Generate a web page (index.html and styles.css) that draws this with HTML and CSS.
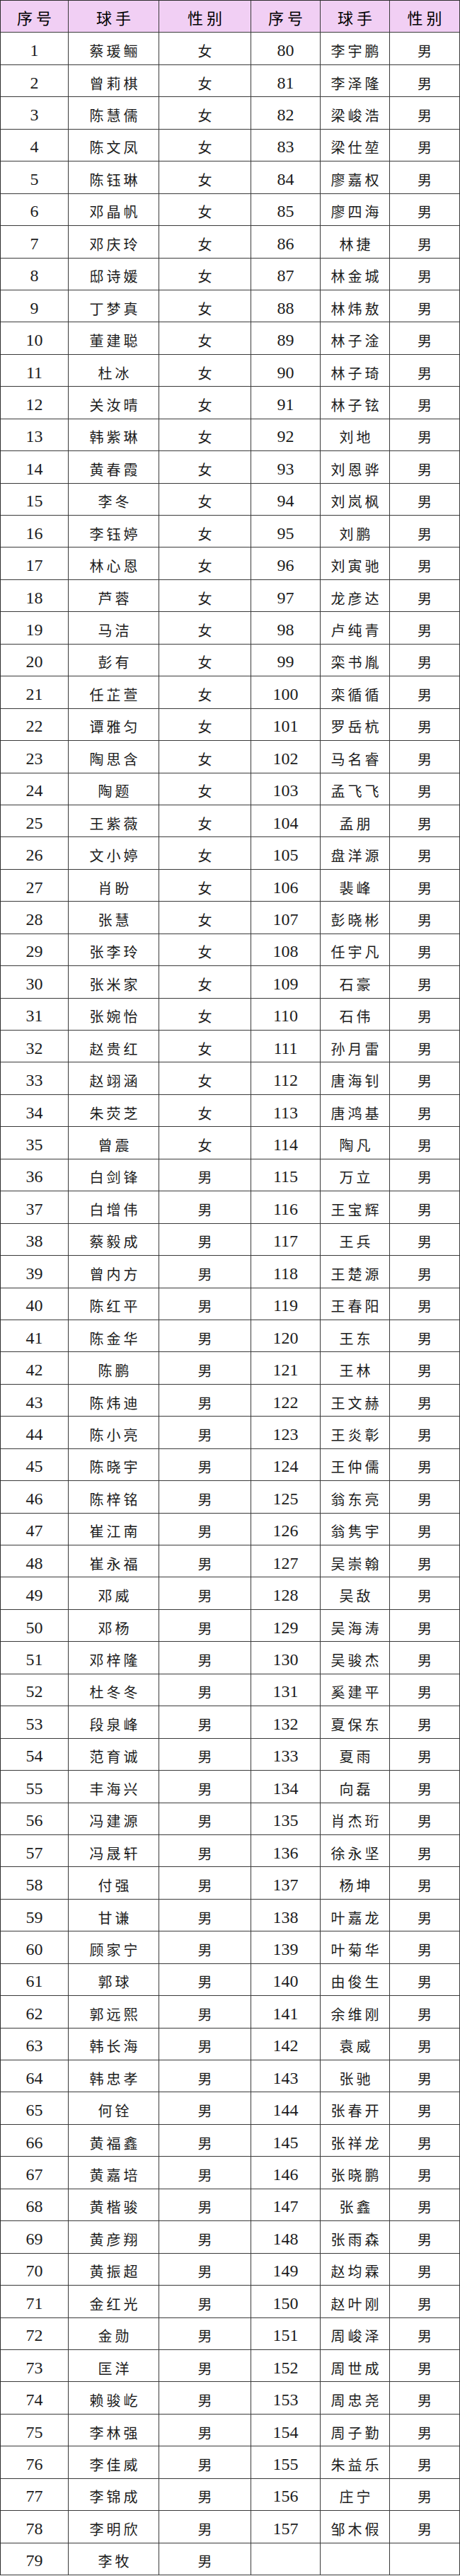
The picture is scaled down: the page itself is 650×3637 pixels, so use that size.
FILE: index.html
```html
<!DOCTYPE html>
<html lang="zh-CN">
<head>
<meta charset="utf-8">
<title>球手名单</title>
<link rel="stylesheet" href="styles.css">
</head>
<body>
<div class="sheet">
<div class="cell zh head">序号</div><div class="cell zh head">球手</div><div class="cell zh head">性别</div><div class="cell zh head">序号</div><div class="cell zh head">球手</div><div class="cell zh head">性别</div>
<div class="cell num">1</div><div class="cell zh">蔡瑗鲡</div><div class="cell zh">女</div><div class="cell num">80</div><div class="cell zh">李宇鹏</div><div class="cell zh">男</div>
<div class="cell num">2</div><div class="cell zh">曾莉棋</div><div class="cell zh">女</div><div class="cell num">81</div><div class="cell zh">李泽隆</div><div class="cell zh">男</div>
<div class="cell num">3</div><div class="cell zh">陈慧儒</div><div class="cell zh">女</div><div class="cell num">82</div><div class="cell zh">梁峻浩</div><div class="cell zh">男</div>
<div class="cell num">4</div><div class="cell zh">陈文凤</div><div class="cell zh">女</div><div class="cell num">83</div><div class="cell zh">梁仕堃</div><div class="cell zh">男</div>
<div class="cell num">5</div><div class="cell zh">陈钰琳</div><div class="cell zh">女</div><div class="cell num">84</div><div class="cell zh">廖嘉权</div><div class="cell zh">男</div>
<div class="cell num">6</div><div class="cell zh">邓晶帆</div><div class="cell zh">女</div><div class="cell num">85</div><div class="cell zh">廖四海</div><div class="cell zh">男</div>
<div class="cell num">7</div><div class="cell zh">邓庆玲</div><div class="cell zh">女</div><div class="cell num">86</div><div class="cell zh">林捷</div><div class="cell zh">男</div>
<div class="cell num">8</div><div class="cell zh">邸诗媛</div><div class="cell zh">女</div><div class="cell num">87</div><div class="cell zh">林金城</div><div class="cell zh">男</div>
<div class="cell num">9</div><div class="cell zh">丁梦真</div><div class="cell zh">女</div><div class="cell num">88</div><div class="cell zh">林炜敖</div><div class="cell zh">男</div>
<div class="cell num">10</div><div class="cell zh">董建聪</div><div class="cell zh">女</div><div class="cell num">89</div><div class="cell zh">林子淦</div><div class="cell zh">男</div>
<div class="cell num">11</div><div class="cell zh">杜冰</div><div class="cell zh">女</div><div class="cell num">90</div><div class="cell zh">林子琦</div><div class="cell zh">男</div>
<div class="cell num">12</div><div class="cell zh">关汝晴</div><div class="cell zh">女</div><div class="cell num">91</div><div class="cell zh">林子铉</div><div class="cell zh">男</div>
<div class="cell num">13</div><div class="cell zh">韩紫琳</div><div class="cell zh">女</div><div class="cell num">92</div><div class="cell zh">刘地</div><div class="cell zh">男</div>
<div class="cell num">14</div><div class="cell zh">黄春霞</div><div class="cell zh">女</div><div class="cell num">93</div><div class="cell zh">刘恩骅</div><div class="cell zh">男</div>
<div class="cell num">15</div><div class="cell zh">李冬</div><div class="cell zh">女</div><div class="cell num">94</div><div class="cell zh">刘岚枫</div><div class="cell zh">男</div>
<div class="cell num">16</div><div class="cell zh">李钰婷</div><div class="cell zh">女</div><div class="cell num">95</div><div class="cell zh">刘鹏</div><div class="cell zh">男</div>
<div class="cell num">17</div><div class="cell zh">林心恩</div><div class="cell zh">女</div><div class="cell num">96</div><div class="cell zh">刘寅驰</div><div class="cell zh">男</div>
<div class="cell num">18</div><div class="cell zh">芦蓉</div><div class="cell zh">女</div><div class="cell num">97</div><div class="cell zh">龙彦达</div><div class="cell zh">男</div>
<div class="cell num">19</div><div class="cell zh">马洁</div><div class="cell zh">女</div><div class="cell num">98</div><div class="cell zh">卢纯青</div><div class="cell zh">男</div>
<div class="cell num">20</div><div class="cell zh">彭有</div><div class="cell zh">女</div><div class="cell num">99</div><div class="cell zh">栾书胤</div><div class="cell zh">男</div>
<div class="cell num">21</div><div class="cell zh">任芷萱</div><div class="cell zh">女</div><div class="cell num">100</div><div class="cell zh">栾循循</div><div class="cell zh">男</div>
<div class="cell num">22</div><div class="cell zh">谭雅匀</div><div class="cell zh">女</div><div class="cell num">101</div><div class="cell zh">罗岳杭</div><div class="cell zh">男</div>
<div class="cell num">23</div><div class="cell zh">陶思含</div><div class="cell zh">女</div><div class="cell num">102</div><div class="cell zh">马名睿</div><div class="cell zh">男</div>
<div class="cell num">24</div><div class="cell zh">陶题</div><div class="cell zh">女</div><div class="cell num">103</div><div class="cell zh">孟飞飞</div><div class="cell zh">男</div>
<div class="cell num">25</div><div class="cell zh">王紫薇</div><div class="cell zh">女</div><div class="cell num">104</div><div class="cell zh">孟朋</div><div class="cell zh">男</div>
<div class="cell num">26</div><div class="cell zh">文小婷</div><div class="cell zh">女</div><div class="cell num">105</div><div class="cell zh">盘洋源</div><div class="cell zh">男</div>
<div class="cell num">27</div><div class="cell zh">肖盼</div><div class="cell zh">女</div><div class="cell num">106</div><div class="cell zh">裴峰</div><div class="cell zh">男</div>
<div class="cell num">28</div><div class="cell zh">张慧</div><div class="cell zh">女</div><div class="cell num">107</div><div class="cell zh">彭晓彬</div><div class="cell zh">男</div>
<div class="cell num">29</div><div class="cell zh">张李玲</div><div class="cell zh">女</div><div class="cell num">108</div><div class="cell zh">任宇凡</div><div class="cell zh">男</div>
<div class="cell num">30</div><div class="cell zh">张米家</div><div class="cell zh">女</div><div class="cell num">109</div><div class="cell zh">石豪</div><div class="cell zh">男</div>
<div class="cell num">31</div><div class="cell zh">张婉怡</div><div class="cell zh">女</div><div class="cell num">110</div><div class="cell zh">石伟</div><div class="cell zh">男</div>
<div class="cell num">32</div><div class="cell zh">赵贵红</div><div class="cell zh">女</div><div class="cell num">111</div><div class="cell zh">孙月雷</div><div class="cell zh">男</div>
<div class="cell num">33</div><div class="cell zh">赵翊涵</div><div class="cell zh">女</div><div class="cell num">112</div><div class="cell zh">唐海钊</div><div class="cell zh">男</div>
<div class="cell num">34</div><div class="cell zh">朱荧芝</div><div class="cell zh">女</div><div class="cell num">113</div><div class="cell zh">唐鸿基</div><div class="cell zh">男</div>
<div class="cell num">35</div><div class="cell zh">曾震</div><div class="cell zh">女</div><div class="cell num">114</div><div class="cell zh">陶凡</div><div class="cell zh">男</div>
<div class="cell num">36</div><div class="cell zh">白剑锋</div><div class="cell zh">男</div><div class="cell num">115</div><div class="cell zh">万立</div><div class="cell zh">男</div>
<div class="cell num">37</div><div class="cell zh">白增伟</div><div class="cell zh">男</div><div class="cell num">116</div><div class="cell zh">王宝辉</div><div class="cell zh">男</div>
<div class="cell num">38</div><div class="cell zh">蔡毅成</div><div class="cell zh">男</div><div class="cell num">117</div><div class="cell zh">王兵</div><div class="cell zh">男</div>
<div class="cell num">39</div><div class="cell zh">曾内方</div><div class="cell zh">男</div><div class="cell num">118</div><div class="cell zh">王楚源</div><div class="cell zh">男</div>
<div class="cell num">40</div><div class="cell zh">陈红平</div><div class="cell zh">男</div><div class="cell num">119</div><div class="cell zh">王春阳</div><div class="cell zh">男</div>
<div class="cell num">41</div><div class="cell zh">陈金华</div><div class="cell zh">男</div><div class="cell num">120</div><div class="cell zh">王东</div><div class="cell zh">男</div>
<div class="cell num">42</div><div class="cell zh">陈鹏</div><div class="cell zh">男</div><div class="cell num">121</div><div class="cell zh">王林</div><div class="cell zh">男</div>
<div class="cell num">43</div><div class="cell zh">陈炜迪</div><div class="cell zh">男</div><div class="cell num">122</div><div class="cell zh">王文赫</div><div class="cell zh">男</div>
<div class="cell num">44</div><div class="cell zh">陈小亮</div><div class="cell zh">男</div><div class="cell num">123</div><div class="cell zh">王炎彰</div><div class="cell zh">男</div>
<div class="cell num">45</div><div class="cell zh">陈晓宇</div><div class="cell zh">男</div><div class="cell num">124</div><div class="cell zh">王仲儒</div><div class="cell zh">男</div>
<div class="cell num">46</div><div class="cell zh">陈梓铭</div><div class="cell zh">男</div><div class="cell num">125</div><div class="cell zh">翁东亮</div><div class="cell zh">男</div>
<div class="cell num">47</div><div class="cell zh">崔江南</div><div class="cell zh">男</div><div class="cell num">126</div><div class="cell zh">翁隽宇</div><div class="cell zh">男</div>
<div class="cell num">48</div><div class="cell zh">崔永福</div><div class="cell zh">男</div><div class="cell num">127</div><div class="cell zh">吴崇翰</div><div class="cell zh">男</div>
<div class="cell num">49</div><div class="cell zh">邓威</div><div class="cell zh">男</div><div class="cell num">128</div><div class="cell zh">吴敌</div><div class="cell zh">男</div>
<div class="cell num">50</div><div class="cell zh">邓杨</div><div class="cell zh">男</div><div class="cell num">129</div><div class="cell zh">吴海涛</div><div class="cell zh">男</div>
<div class="cell num">51</div><div class="cell zh">邓梓隆</div><div class="cell zh">男</div><div class="cell num">130</div><div class="cell zh">吴骏杰</div><div class="cell zh">男</div>
<div class="cell num">52</div><div class="cell zh">杜冬冬</div><div class="cell zh">男</div><div class="cell num">131</div><div class="cell zh">奚建平</div><div class="cell zh">男</div>
<div class="cell num">53</div><div class="cell zh">段泉峰</div><div class="cell zh">男</div><div class="cell num">132</div><div class="cell zh">夏保东</div><div class="cell zh">男</div>
<div class="cell num">54</div><div class="cell zh">范育诚</div><div class="cell zh">男</div><div class="cell num">133</div><div class="cell zh">夏雨</div><div class="cell zh">男</div>
<div class="cell num">55</div><div class="cell zh">丰海兴</div><div class="cell zh">男</div><div class="cell num">134</div><div class="cell zh">向磊</div><div class="cell zh">男</div>
<div class="cell num">56</div><div class="cell zh">冯建源</div><div class="cell zh">男</div><div class="cell num">135</div><div class="cell zh">肖杰珩</div><div class="cell zh">男</div>
<div class="cell num">57</div><div class="cell zh">冯晟轩</div><div class="cell zh">男</div><div class="cell num">136</div><div class="cell zh">徐永坚</div><div class="cell zh">男</div>
<div class="cell num">58</div><div class="cell zh">付强</div><div class="cell zh">男</div><div class="cell num">137</div><div class="cell zh">杨坤</div><div class="cell zh">男</div>
<div class="cell num">59</div><div class="cell zh">甘谦</div><div class="cell zh">男</div><div class="cell num">138</div><div class="cell zh">叶嘉龙</div><div class="cell zh">男</div>
<div class="cell num">60</div><div class="cell zh">顾家宁</div><div class="cell zh">男</div><div class="cell num">139</div><div class="cell zh">叶菊华</div><div class="cell zh">男</div>
<div class="cell num">61</div><div class="cell zh">郭球</div><div class="cell zh">男</div><div class="cell num">140</div><div class="cell zh">由俊生</div><div class="cell zh">男</div>
<div class="cell num">62</div><div class="cell zh">郭远熙</div><div class="cell zh">男</div><div class="cell num">141</div><div class="cell zh">余维刚</div><div class="cell zh">男</div>
<div class="cell num">63</div><div class="cell zh">韩长海</div><div class="cell zh">男</div><div class="cell num">142</div><div class="cell zh">袁威</div><div class="cell zh">男</div>
<div class="cell num">64</div><div class="cell zh">韩忠孝</div><div class="cell zh">男</div><div class="cell num">143</div><div class="cell zh">张驰</div><div class="cell zh">男</div>
<div class="cell num">65</div><div class="cell zh">何铨</div><div class="cell zh">男</div><div class="cell num">144</div><div class="cell zh">张春开</div><div class="cell zh">男</div>
<div class="cell num">66</div><div class="cell zh">黄福鑫</div><div class="cell zh">男</div><div class="cell num">145</div><div class="cell zh">张祥龙</div><div class="cell zh">男</div>
<div class="cell num">67</div><div class="cell zh">黄嘉培</div><div class="cell zh">男</div><div class="cell num">146</div><div class="cell zh">张晓鹏</div><div class="cell zh">男</div>
<div class="cell num">68</div><div class="cell zh">黄楷骏</div><div class="cell zh">男</div><div class="cell num">147</div><div class="cell zh">张鑫</div><div class="cell zh">男</div>
<div class="cell num">69</div><div class="cell zh">黄彦翔</div><div class="cell zh">男</div><div class="cell num">148</div><div class="cell zh">张雨森</div><div class="cell zh">男</div>
<div class="cell num">70</div><div class="cell zh">黄振超</div><div class="cell zh">男</div><div class="cell num">149</div><div class="cell zh">赵均霖</div><div class="cell zh">男</div>
<div class="cell num">71</div><div class="cell zh">金红光</div><div class="cell zh">男</div><div class="cell num">150</div><div class="cell zh">赵叶刚</div><div class="cell zh">男</div>
<div class="cell num">72</div><div class="cell zh">金勋</div><div class="cell zh">男</div><div class="cell num">151</div><div class="cell zh">周峻泽</div><div class="cell zh">男</div>
<div class="cell num">73</div><div class="cell zh">匡洋</div><div class="cell zh">男</div><div class="cell num">152</div><div class="cell zh">周世成</div><div class="cell zh">男</div>
<div class="cell num">74</div><div class="cell zh">赖骏屹</div><div class="cell zh">男</div><div class="cell num">153</div><div class="cell zh">周忠尧</div><div class="cell zh">男</div>
<div class="cell num">75</div><div class="cell zh">李林强</div><div class="cell zh">男</div><div class="cell num">154</div><div class="cell zh">周子勤</div><div class="cell zh">男</div>
<div class="cell num">76</div><div class="cell zh">李佳威</div><div class="cell zh">男</div><div class="cell num">155</div><div class="cell zh">朱益乐</div><div class="cell zh">男</div>
<div class="cell num">77</div><div class="cell zh">李锦成</div><div class="cell zh">男</div><div class="cell num">156</div><div class="cell zh">庄宁</div><div class="cell zh">男</div>
<div class="cell num">78</div><div class="cell zh">李明欣</div><div class="cell zh">男</div><div class="cell num">157</div><div class="cell zh">邹木假</div><div class="cell zh">男</div>
<div class="cell num">79</div><div class="cell zh">李牧</div><div class="cell zh">男</div><div class="cell"></div><div class="cell"></div><div class="cell"></div>
</div>
</body>
</html>
```
FILE: styles.css
```css
html, body {
  margin: 0;
  padding: 0;
  background: #ffffff;
}

.sheet {
  display: grid;
  grid-template-columns: 96px 128px 130px 98px 98px 99px;
  grid-auto-rows: 45.45px;
  width: 650px;
  box-sizing: border-box;
  border-top: 1px solid #2e2e2e;
  border-left: 1px solid #2e2e2e;
}

.cell {
  box-sizing: border-box;
  border-right: 1px solid #3a3a3a;
  border-bottom: 1px solid #3a3a3a;
  display: flex;
  align-items: center;
  justify-content: center;
  padding-top: 6px;
  color: #1c1c1c;
  white-space: nowrap;
  overflow: hidden;
}

.num {
  font-family: "Liberation Serif", "Times New Roman", serif;
  font-size: 24px;
}

.zh {
  font-family: "Noto Sans CJK SC", "Noto Sans", sans-serif;
  font-size: 20px;
  letter-spacing: 4px;
  padding-left: 4px;
}

.head {
  background: #f1cff4;
  color: #000000;
  font-size: 22px;
  letter-spacing: 5px;
  padding-left: 5px;
  padding-top: 2px;
}
```
